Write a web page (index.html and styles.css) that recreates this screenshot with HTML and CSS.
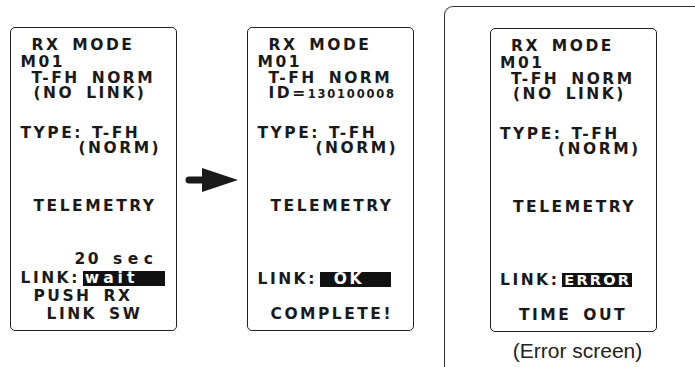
FILE: index.html
```html
<!DOCTYPE html>
<html lang="en">
<head>
  <meta charset="UTF-8" />
  <title>RX MODE link screens</title>
  <link rel="stylesheet" href="styles.css">
</head>
<body>
  <main class="strip">

    <div class="lcd">
      <div class="ln in1">RX MODE</div>
      <div class="ln g-m01">M01</div>
      <div class="ln in1 g-sys">T-FH NORM</div>
      <div class="ln in2 g-sub">(NO LINK)</div>
      <div class="ln g-type">TYPE:<span class="val">T-FH</span></div>
      <div class="ln in-norm g-norm">(NORM)</div>
      <div class="ln in2 g-tele">TELEMETRY</div>
      <div class="bottom">
        <div class="ln in-sec">20 <span class="unit">sec</span></div>
        <div class="ln g-link">LINK:<span class="hl hl-wait">wait</span></div>
        <div class="ln in2 g-msg">PUSH RX</div>
        <div class="ln in3 g-msg">LINK SW</div>
      </div>
    </div>

    <svg class="arrow" width="54" height="26" viewBox="0 0 54 26">
      <path d="M4 9.5 H18 V16.5 H4 A3.5 3.5 0 0 1 4 9.5 Z" fill="#1a1a1a"/>
      <polygon points="17,1 53,13 17,25" fill="#1a1a1a"/>
    </svg>

    <div class="lcd">
      <div class="ln in1">RX MODE</div>
      <div class="ln g-m01">M01</div>
      <div class="ln in1 g-sys">T-FH NORM</div>
      <div class="ln in1 g-sub">ID=<span class="id">130100008</span></div>
      <div class="ln g-type">TYPE:<span class="val">T-FH</span></div>
      <div class="ln in-norm g-norm">(NORM)</div>
      <div class="ln in2 g-tele">TELEMETRY</div>
      <div class="bottom">
        <div class="ln">LINK:<span class="hl hl-ok">OK</span></div>
        <div class="ln in2 g-end">COMPLETE!</div>
      </div>
    </div>

    <section class="error-box">
      <div class="lcd lcd-err">
        <div class="ln in1">RX MODE</div>
        <div class="ln g-m01">M01</div>
        <div class="ln in1 g-sys">T-FH NORM</div>
        <div class="ln in2 g-sub">(NO LINK)</div>
        <div class="ln g-type">TYPE:<span class="val">T-FH</span></div>
        <div class="ln in-norm g-norm">(NORM)</div>
        <div class="ln in2 g-tele">TELEMETRY</div>
        <div class="bottom">
          <div class="ln">LINK:<span class="hl hl-err">ERROR</span></div>
          <div class="ln in-out g-end">TIME OUT</div>
        </div>
      </div>
      <p class="caption">(Error screen)</p>
    </section>

  </main>
</body>
</html>
```

FILE: styles.css
```css
html, body {
  margin: 0;
  padding: 0;
  background: #fff;
  overflow: hidden;
}

.strip {
  display: flex;
  align-items: flex-start;
  padding-left: 10px;
}

.strip > * {
  flex-shrink: 0;
}

/* one LCD panel */
.lcd {
  box-sizing: border-box;
  width: 167px;
  height: 304px;
  margin-top: 27px;
  padding: 10px 0 9px 9.5px;
  border: 1.5px solid #222;
  border-radius: 5px;
  display: flex;
  flex-direction: column;
  font-family: "DejaVu Sans", sans-serif;
  font-weight: bold;
  font-size: 15.5px;
  letter-spacing: 2.5px;
  word-spacing: 4px;
  color: #1a1a1a;
}

.ln {
  height: 14px;
  line-height: 14px;
  white-space: pre;
}

.bottom {
  margin-top: auto;
}

/* indents */
.in1 { padding-left: 11px; }
.in2 { padding-left: 13px; }
.in3 { padding-left: 26px; }
.in-norm { padding-left: 58px; }
.in-sec { padding-left: 54px; }
.in-out { padding-left: 19px; }

/* row gaps */
.g-m01 { margin-top: 3px; }
.g-sys { margin-top: 2px; }
.g-sub { margin-top: 1px; }
.g-type { margin-top: 26px; }
.g-norm { margin-top: 1px; }
.g-tele { margin-top: 44px; }
.g-link { margin-top: 5px; }
.g-msg { margin-top: 4px; }
.g-end { margin-top: 21px; }

.val {
  margin-left: 9px;
}

.unit {
  letter-spacing: 5.5px;
}

.id {
  font-size: 11.5px;
  letter-spacing: 1.8px;
}

.hl {
  display: inline-block;
  box-sizing: border-box;
  height: 15px;
  line-height: 15px;
  margin-left: 3px;
  background: #111;
  color: #fff;
}

.hl-wait {
  width: 82px;
  padding-left: 2px;
  letter-spacing: 4px;
}

.hl-ok {
  width: 71px;
  padding-left: 14px;
}

.hl-err {
  width: 70px;
  height: 14px;
  line-height: 14px;
  padding-left: 2px;
  font-size: 14.5px;
  letter-spacing: 2.2px;
}

.arrow {
  margin: 167px 8px 0 8px;
}

/* framed error example, runs off the page */
.error-box {
  box-sizing: border-box;
  width: 300px;
  height: 420px;
  margin-left: 30px;
  margin-top: 6px;
  padding: 20.5px 0 0 44.5px;
  border-left: 1.5px solid #333;
  border-top: 1.5px solid #333;
  border-top-left-radius: 9px;
}

.lcd-err {
  margin-top: 0;
}

.caption {
  width: 167px;
  margin: 7px 0 0;
  padding-left: 9px;
  box-sizing: border-box;
  text-align: center;
  font-family: "Liberation Sans", Arial, sans-serif;
  font-size: 21px;
  line-height: 24px;
  color: #222;
}
```
